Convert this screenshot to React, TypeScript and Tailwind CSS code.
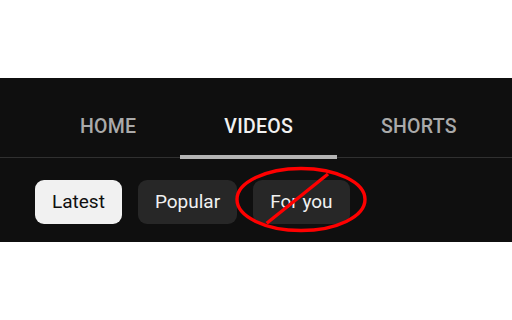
import React from "react";

export default function App() {
  const tabs = [
    { label: "HOME", active: false },
    { label: "VIDEOS", active: true },
    { label: "SHORTS", active: false },
  ];
  const chips = [
    { label: "Latest", active: true },
    { label: "Popular", active: false },
    { label: "For you", active: false },
  ];
  return (
    <div
      className="relative w-[512px] h-[320px] bg-white overflow-hidden"
      style={{ fontFamily: "Roboto, 'Liberation Sans', sans-serif" }}
    >
      <div className="h-[78px]" />
      <div className="h-[164px] bg-[#0f0f0f]">
        <div className="flex h-[80px] border-b border-[#303030] pl-[36px]">
          {tabs.map((t) => (
            <div
              key={t.label}
              className={`relative flex items-center justify-center px-[44px] pt-[19px] text-[19.5px] font-medium tracking-[0.25px] ${
                t.active ? "text-[#f1f1f1]" : "text-[#aaaaaa]"
              }`}
            >
              {t.label}
              {t.active && (
                <div className="absolute left-0 right-0 top-[77px] h-[4px] bg-[#b4b4b4]" />
              )}
            </div>
          ))}
        </div>
        <div className="flex gap-[16px] pl-[35px] mt-[22px]">
          {chips.map((c) => (
            <div
              key={c.label}
              className={`flex items-center h-[44px] px-[17px] rounded-[9px] text-[19px] ${
                c.active
                  ? "bg-[#f1f1f1] text-[#0f0f0f]"
                  : "bg-[#272727] text-[#f1f1f1]"
              }`}
            >
              {c.label}
            </div>
          ))}
        </div>
      </div>
      <svg
        className="absolute left-[230px] top-[164px]"
        width="142"
        height="72"
        viewBox="0 0 142 72"
      >
        <ellipse
          cx="71"
          cy="35.5"
          rx="64"
          ry="31"
          fill="none"
          stroke="#ff0000"
          strokeWidth="3.4"
        />
        <line
          x1="36.7"
          y1="59.3"
          x2="98"
          y2="10"
          stroke="#ff0000"
          strokeWidth="3.4"
        />
      </svg>
    </div>
  );
}
